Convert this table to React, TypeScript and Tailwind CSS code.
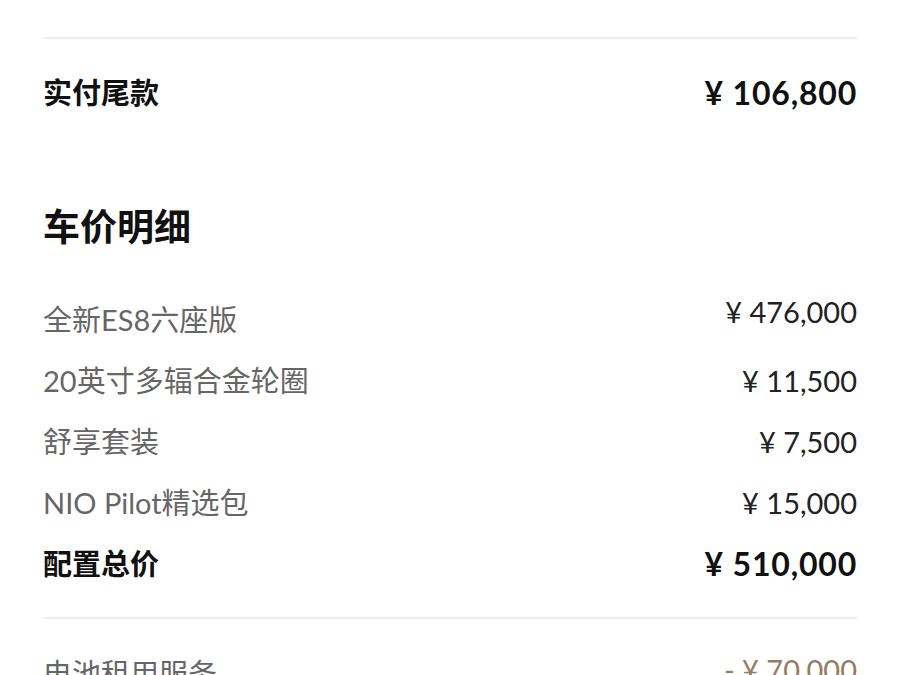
const items = [
    { name: "全新ES8六座版", price: "476,000", lift: true },
    { name: "20英寸多辐合金轮圈", price: "11,500", lift: false },
    { name: "舒享套装", price: "7,500", lift: false },
    { name: "NIO Pilot精选包", price: "15,000", lift: false },
];

function Divider({ className }: { className: string }) {
    return <div className={"h-[2px] w-full bg-[#eeeeee] " + className} />;
}

export default function App() {
    return (
        <div
            className="h-[675px] w-full overflow-hidden bg-white px-[43px] pt-[37px]"
            style={{ fontFamily: 'Lato, "Noto Sans CJK SC", sans-serif' }}
        >
            <Divider className="" />

            {/* balance due */}
            <div className="mt-[34px] flex h-10 items-center justify-between">
                <span className="text-[29px] font-bold text-[#111111]">
                    实付尾款
                </span>
                <span className="text-[32px] font-bold tracking-[0.8px] text-[#111111]">
                    ¥ 106,800
                </span>
            </div>

            <h2 className="mt-[90px] flex h-12 items-center text-[37px] font-bold text-[#111111]">
                车价明细
            </h2>

            <div className="mt-[38px] flex flex-col">
                {items.map((item) => (
                    <div
                        key={item.name}
                        className="flex h-[61px] items-center justify-between"
                    >
                        <span className="text-[29px] text-[#666666]">
                            {item.name}
                        </span>
                        <span
                            className={
                                item.lift
                                    ? "mb-4 text-[29px] text-[#222222]"
                                    : "text-[29px] text-[#222222]"
                            }
                        >
                            ¥ {item.price}
                        </span>
                    </div>
                ))}
                <div className="flex h-[61px] items-center justify-between">
                    <span className="text-[29px] font-bold text-[#111111]">
                        配置总价
                    </span>
                    <span className="text-[32px] font-bold tracking-[0.8px] text-[#111111]">
                        ¥ 510,000
                    </span>
                </div>
            </div>

            <Divider className="mt-[23px]" />

            <div className="mt-[31px] flex h-10 items-center justify-between">
                <span className="mt-2 text-[29px] text-[#666666]">
                    电池租用服务
                </span>
                <span className="text-[29px] text-[#957c62]">- ¥ 70,000</span>
            </div>
        </div>
    );
}
